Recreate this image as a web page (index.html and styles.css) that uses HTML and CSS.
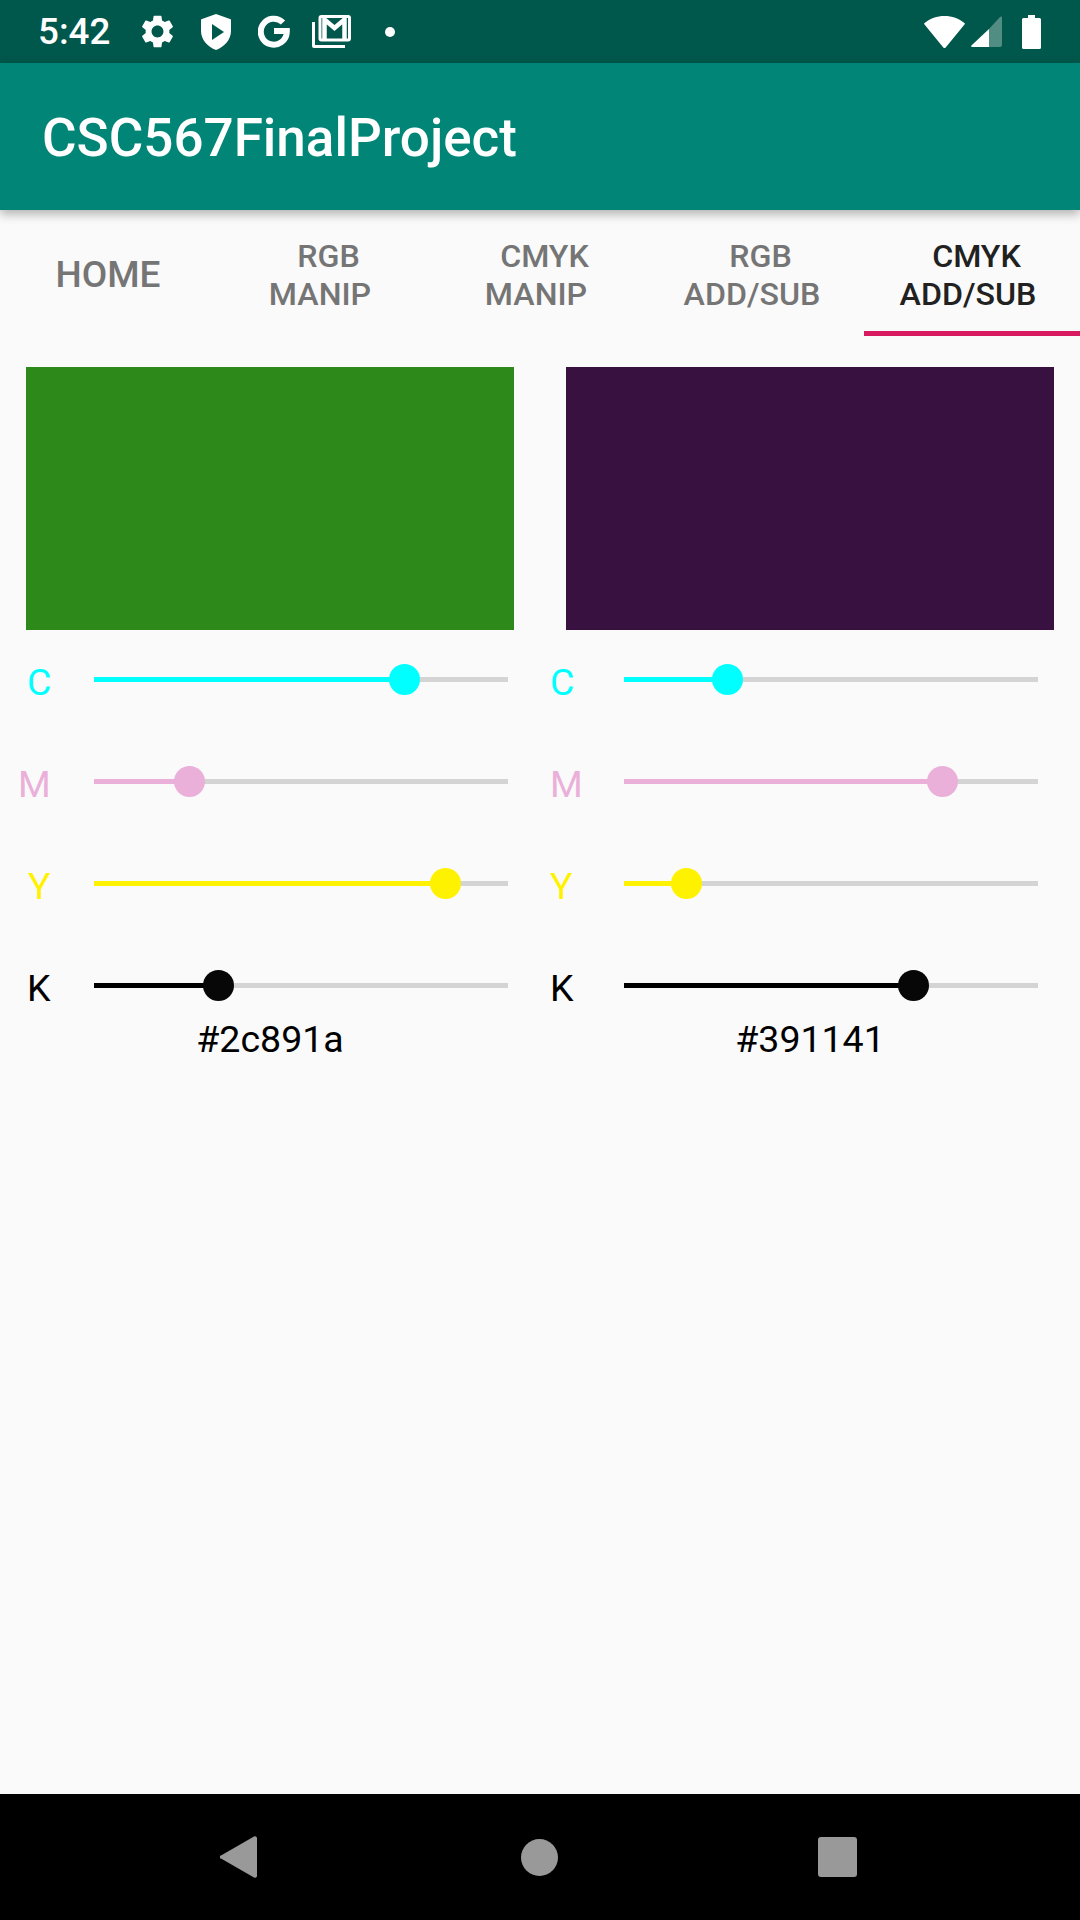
FILE: index.html
```html
<!DOCTYPE html>
<html lang="en">

<head>
    <meta charset="UTF-8">
    <meta name="viewport" content="width=device-width, initial-scale=1.0">
    <title>CSC567FinalProject</title>
    <link rel="stylesheet" href="styles.css">
</head>

<body>
    <div class="status-bar">
        <span class="time">5:42</span>
        <svg class="icon gear" viewBox="2.6 2 18.8 20" width="33" height="33"><path fill="#fff" d="M19.14 12.94c.04-.3.06-.61.06-.94 0-.32-.02-.64-.07-.94l2.03-1.58c.18-.14.23-.41.12-.61l-1.92-3.32c-.12-.22-.37-.29-.59-.22l-2.39.96c-.5-.38-1.03-.7-1.62-.94l-.36-2.54c-.04-.24-.24-.41-.48-.41h-3.84c-.24 0-.43.17-.47.41l-.36 2.54c-.59.24-1.13.57-1.62.94l-2.39-.96c-.22-.08-.47 0-.59.22L2.74 8.87c-.12.21-.08.47.12.61l2.03 1.58c-.05.3-.09.63-.09.94s.02.64.07.94l-2.03 1.58c-.18.14-.23.41-.12.61l1.92 3.32c.12.22.37.29.59.22l2.39-.96c.5.38 1.03.7 1.62.94l.36 2.54c.05.24.24.41.48.41h3.84c.24 0 .44-.17.47-.41l.36-2.54c.59-.24 1.13-.56 1.62-.94l2.39.96c.22.08.47 0 .59-.22l1.92-3.32c.12-.22.07-.47-.12-.61l-2.01-1.58zM12 15.6c-1.98 0-3.6-1.62-3.6-3.6s1.62-3.6 3.6-3.6 3.6 1.62 3.6 3.6-1.62 3.6-3.6 3.6z"/></svg>
        <svg class="icon shield" viewBox="0 0 30 36" width="30" height="36"><path fill="#fff" fill-rule="evenodd" d="M15 0L29 5a1 1 0 0 1 1 1V17C30 26 23 33 15 36C7 33 0 26 0 17V6a1 1 0 0 1 1-1ZM11 10V26L23 18Z"/></svg>
        <svg class="icon google" viewBox="0 0 32 33" width="32" height="33"><path fill="none" stroke="#fff" stroke-width="6" d="M25 7.5A13 13 0 1 0 28.8 17V16H16"/></svg>
        <svg class="icon mail" viewBox="0 0 39 33" width="39" height="33">
            <path fill="#fff" d="M0 7h3v23h30v3H2a2 2 0 0 1-2-2Z"/>
            <rect x="8" y="1.500" width="29.500" height="23.500" rx="1.500" fill="none" stroke="#fff" stroke-width="3"/>
            <path fill="none" stroke="#fff" stroke-width="4.500" d="M12.500 24V4.500l10 8.500l10-8.500V24"/>
        </svg>
        <span class="dot"></span>
        <div class="status-right">
            <svg class="icon" viewBox="0 0 41 32" width="41" height="32"><path fill="#fff" d="M20.5 0C28 0 35 2.600 40.400 7a1 1 0 0 1 .1 1.500L21.700 31.400a1.500 1.500 0 0 1-2.400 0L.5 8.500A1 1 0 0 1 .6 7C6 2.600 13 0 20.500 0Z"/></svg>
            <svg class="icon signal" viewBox="0 0 31 31" width="31" height="31">
                <path fill="#fff" fill-opacity=".32" d="M18 31V13L29 1a1.100 1.100 0 0 1 2 .8V29a2 2 0 0 1-2 2Z"/>
                <path fill="#fff" d="M18 13V31H1a.8.8 0 0 1-.6-1.400Z"/>
            </svg>
            <svg class="icon battery" viewBox="0 0 19 34" width="19" height="34"><path fill="#fff" d="M6 0h7v3h4.500A1.500 1.500 0 0 1 19 4.500V32.500A1.500 1.500 0 0 1 17.500 34H1.500A1.500 1.500 0 0 1 0 32.500V4.500A1.500 1.500 0 0 1 1.500 3H6Z"/></svg>
        </div>
    </div>

    <div class="app-bar">CSC567FinalProject</div>

    <div class="tabs">
        <div class="tab tab-single">HOME</div>
        <div class="tab"><span class="line-top">RGB</span><span class="line-bottom">MANIP</span></div>
        <div class="tab"><span class="line-top">CMYK</span><span class="line-bottom">MANIP</span></div>
        <div class="tab"><span class="line-top">RGB</span><span class="line-bottom">ADD/SUB</span></div>
        <div class="tab tab-active"><span class="line-top">CMYK</span><span class="line-bottom">ADD/SUB</span></div>
    </div>

    <div class="content">
        <div class="panel panel-left">
            <div class="swatch swatch-green"></div>
            <div class="sliders">
                <div class="slider-row cyan">
                    <span class="label">C</span>
                    <div class="track"><div class="fill" style="width: 75%"><span class="thumb"></span></div></div>
                </div>
                <div class="slider-row magenta">
                    <span class="label label-m">M</span>
                    <div class="track"><div class="fill" style="width: 23%"><span class="thumb"></span></div></div>
                </div>
                <div class="slider-row yellow">
                    <span class="label label-y">Y</span>
                    <div class="track"><div class="fill" style="width: 85%"><span class="thumb"></span></div></div>
                </div>
                <div class="slider-row black">
                    <span class="label">K</span>
                    <div class="track"><div class="fill" style="width: 30%"><span class="thumb"></span></div></div>
                </div>
            </div>
            <div class="hex">#2c891a</div>
        </div>

        <div class="panel panel-right">
            <div class="swatch swatch-purple"></div>
            <div class="sliders">
                <div class="slider-row cyan">
                    <span class="label">C</span>
                    <div class="track"><div class="fill" style="width: 25%"><span class="thumb"></span></div></div>
                </div>
                <div class="slider-row magenta">
                    <span class="label">M</span>
                    <div class="track"><div class="fill" style="width: 77%"><span class="thumb"></span></div></div>
                </div>
                <div class="slider-row yellow">
                    <span class="label">Y</span>
                    <div class="track"><div class="fill" style="width: 15%"><span class="thumb"></span></div></div>
                </div>
                <div class="slider-row black">
                    <span class="label">K</span>
                    <div class="track"><div class="fill" style="width: 70%"><span class="thumb"></span></div></div>
                </div>
            </div>
            <div class="hex">#391141</div>
        </div>
    </div>

    <div class="nav-bar">
        <svg class="nav-back" viewBox="0 0 37 42" width="37" height="42"><path fill="#999" d="M1 19.500L34 .5A2 2 0 0 1 37 2V40A2 2 0 0 1 34 41.500L1 22.500A1.500 1.500 0 0 1 1 19.500Z"/></svg>
        <span class="nav-home"></span>
        <span class="nav-recent"></span>
    </div>
</body>

</html>
```

FILE: styles.css
```css
body {
    font-family: Roboto, sans-serif;
    background-color: #fafafa;
    margin: 0;
    padding: 0;
    width: 1080px;
    height: 1920px;
    display: flex;
    flex-direction: column;
    overflow: hidden;
}

/* Status bar */
.status-bar {
    height: 63px;
    flex-shrink: 0;
    background-color: #00574b;
    color: #fff;
    display: flex;
    align-items: center;
    padding: 0 39px 0 38px;
    box-sizing: border-box;
}

.time {
    font-size: 36.75px;
    font-weight: 500;
    width: 71px;
    white-space: nowrap;
}

.icon {
    display: block;
    flex-shrink: 0;
}

.gear {
    margin-left: 32px;
}

.shield {
    margin-left: 27px;
}

.google {
    margin-left: 27px;
}

.mail {
    margin-left: 22px;
}

.dot {
    width: 10px;
    height: 10px;
    margin-left: 34px;
    border-radius: 50%;
    background-color: #fff;
}

.status-right {
    margin-left: auto;
    display: flex;
    align-items: center;
}

.signal {
    margin-left: 6px;
}

.battery {
    margin-left: 20px;
}

/* App bar */
.app-bar {
    height: 147px;
    flex-shrink: 0;
    box-sizing: border-box;
    background-color: #008577;
    color: #fff;
    font-size: 53px;
    font-weight: 500;
    line-height: 147px;
    padding: 2px 0 0 42px;
    box-shadow: 0 4px 10px rgba(0, 0, 0, 0.3);
}

/* Tabs */
.tabs {
    height: 126px;
    flex-shrink: 0;
    display: flex;
}

.tab {
    width: 216px;
    height: 126px;
    box-sizing: border-box;
    display: flex;
    flex-direction: column;
    align-items: center;
    justify-content: center;
    padding-top: 3px;
    font-size: 32.2px;
    font-weight: 500;
    line-height: 38px;
    color: #757575;
}

.tab-single {
    font-size: 37px;
}

.tab-active {
    color: #212121;
    border-bottom: 5px solid #d81b60;
    padding-top: 8px;
}

.line-top {
    padding-left: 9px;
}

.line-bottom {
    padding-right: 8px;
}

/* Two columns */
.content {
    flex: 1;
    display: flex;
    padding-top: 31px;
}

.panel {
    width: 540px;
}

.swatch {
    width: 488px;
    height: 263px;
    margin-left: 26px;
}

.swatch-green {
    background-color: #2c891a;
}

.swatch-purple {
    background-color: #391141;
}

.sliders {
    display: flex;
    flex-direction: column;
    gap: 41px;
    margin-top: 19px;
}

.slider-row {
    height: 61px;
    display: flex;
    align-items: center;
}

.panel-left .slider-row {
    padding-left: 27px;
}

.panel-right .slider-row {
    padding-left: 10px;
}

.label {
    font-size: 37.5px;
    padding-top: 5px;
}

.panel-left .label {
    width: 67px;
}

.panel-right .label {
    width: 74px;
}

.panel-left .label-m {
    margin-left: -9px;
    width: 76px;
}

.panel-left .label-y {
    margin-left: 1px;
    width: 66px;
}

.track {
    width: 414px;
    height: 5px;
    background-color: #d4d4d4;
}

.fill {
    height: 5px;
    position: relative;
}

.thumb {
    position: absolute;
    right: -15.5px;
    top: -13px;
    width: 31px;
    height: 31px;
    border-radius: 50%;
}

.cyan .label {
    color: #00ffff;
}

.cyan .fill,
.cyan .thumb {
    background-color: #00ffff;
}

.magenta .label {
    color: #eab0d9;
}

.magenta .fill,
.magenta .thumb {
    background-color: #eab0d9;
}

.yellow .label {
    color: #fff200;
}

.yellow .fill,
.yellow .thumb {
    background-color: #fff200;
}

.black .label {
    color: #000;
}

.black .fill {
    background-color: #000;
}

.black .thumb {
    background-color: #070707;
}

.hex {
    width: 488px;
    margin: 2px 0 0 26px;
    font-size: 37.5px;
    line-height: 43px;
    text-align: center;
    color: #000;
}

/* Navigation bar */
.nav-bar {
    height: 126px;
    flex-shrink: 0;
    background-color: #000;
    display: flex;
    align-items: center;
    padding-left: 220px;
}

.nav-home {
    width: 37px;
    height: 37px;
    margin-left: 264px;
    border-radius: 50%;
    background-color: #999;
}

.nav-recent {
    width: 39px;
    height: 40px;
    margin-left: 260px;
    border-radius: 3px;
    background-color: #999;
}
```
